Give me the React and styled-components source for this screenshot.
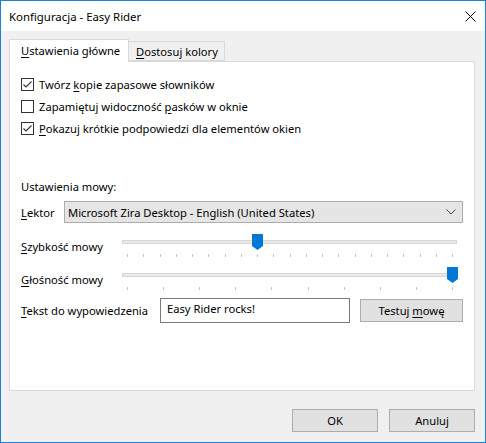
import React from "react";
import styled, { createGlobalStyle } from "styled-components";

const Global = createGlobalStyle`
  html, body { margin: 0; padding: 0; background: #fff; }
  body { font-family: "Noto Sans", "Open Sans", sans-serif; font-size: 11.2px; color: #000; }
  * { box-sizing: border-box; }
`;

const Window = styled.div`
  width: 486px;
  height: 443px;
  border: 1px solid #1883d7;
  background: #f0f0f0;
  display: flex;
  flex-direction: column;
`;

const TitleBar = styled.div`
  height: 30px;
  background: #fff;
  display: flex;
  align-items: center;
  justify-content: space-between;
  padding: 0 9px 0 8px;
  font-size: 11.4px;
`;

const Body = styled.div`
  flex: 1;
  display: flex;
  flex-direction: column;
  padding: 8px 10px 0 8px;
`;

const TabStrip = styled.div`
  display: flex;
  align-items: flex-end;
  height: 22px;
  position: relative;
  z-index: 1;
`;

const Tab = styled.div`
  height: ${(p) => (p.$active ? "23px" : "20px")};
  margin-bottom: ${(p) => (p.$active ? "-1px" : "0")};
  width: ${(p) => p.$w}px;
  padding-left: ${(p) => (p.$active ? "11px" : "7px")};
  background: ${(p) => (p.$active ? "#fff" : "#f0f0f0")};
  border: 1px solid #d9d9d9;
  border-bottom: ${(p) => (p.$active ? "none" : "1px solid #d9d9d9")};
  border-left: ${(p) => (p.$first ? "1px solid #d9d9d9" : "none")};
  display: flex;
  align-items: center;
  padding-bottom: ${(p) => (p.$active ? "2px" : "0")};
`;

const Panel = styled.div`
  height: 330px;
  background: #fff;
  border: 1px solid #d9d9d9;
  padding: 11px 11px 0 11px;
  display: flex;
  flex-direction: column;
`;

const CheckRow = styled.label`
  height: 22px;
  display: flex;
  align-items: center;
  gap: 5px;
`;

const Box = styled.span`
  width: 13px;
  height: 13px;
  border: 1px solid #333;
  background: #fff;
  display: inline-flex;
  align-items: center;
  justify-content: center;
`;

const U = styled.span`
  text-decoration: underline;
  text-underline-offset: 2px;
`;

const SectionLabel = styled.div`
  margin-top: 38px;
  height: 18px;
  display: flex;
  align-items: center;
`;

const FieldRow = styled.div`
  display: flex;
  align-items: center;
  margin-top: ${(p) => p.$mt}px;
  height: ${(p) => p.$h}px;
`;

const Label = styled.div`
  width: ${(p) => p.$w}px;
  flex: none;
`;

const Select = styled.div`
  width: 401px;
  height: 22px;
  background: #e5e5e5;
  border: 1px solid #acacac;
  display: flex;
  align-items: center;
  justify-content: space-between;
  padding: 0 6px 0 3px;
`;

const SliderBox = styled.div`
  position: relative;
  width: 335px;
  height: 24px;
`;

const Track = styled.div`
  position: absolute;
  left: 0;
  right: 0;
  top: 6px;
  height: 4px;
  background: #e7eaea;
  border: 1px solid #d6d6d6;
`;

const Tick = styled.div`
  position: absolute;
  top: 20px;
  width: 1px;
  height: 3px;
  background: #c4c4c4;
`;

const Thumb = styled.svg`
  position: absolute;
  top: 0;
  width: 11px;
  height: 16px;
`;

const TextInput = styled.div`
  width: 190px;
  height: 25px;
  border: 1px solid #7a7a7a;
  background: #fff;
  padding: 2px 0 0 6px;
`;

const Button = styled.div`
  width: ${(p) => p.$w}px;
  height: 23px;
  background: #e1e1e1;
  border: 1px solid #adadad;
  display: flex;
  align-items: center;
  justify-content: center;
`;

const Footer = styled.div`
  display: flex;
  justify-content: flex-end;
  gap: 11px;
  margin-top: 18px;
`;

function Check({ checked, children }) {
  return (
    <CheckRow>
      <Box>
        {checked && (
          <svg width="11" height="11" viewBox="0 0 11 11">
            <path d="M1.5 5.5 L4 8 L9.5 2.5" fill="none" stroke="#333" strokeWidth="1.1" />
          </svg>
        )}
      </Box>
      <span>{children}</span>
    </CheckRow>
  );
}

function Slider({ ticks, value }) {
  const span = 325;
  const list = [];
  for (let i = 0; i <= ticks; i++) list.push(i);
  const x = 5 + (span * value) / ticks;
  return (
    <SliderBox>
      <Track />
      {list.map((i) => (
        <Tick key={i} style={{ left: Math.round(5 + (span * i) / ticks) }} />
      ))}
      <Thumb viewBox="0 0 11 16" style={{ left: Math.round(x - 5) }}>
        <path d="M0 0 H11 V12 L5.5 16 L0 12 Z" fill="#0078d7" />
      </Thumb>
    </SliderBox>
  );
}

export default function App() {
  return (
    <>
      <Global />
      <Window>
        <TitleBar>
          <span>Konfiguracja - Easy Rider</span>
          <svg width="11" height="11" viewBox="0 0 11 11">
            <path d="M0.5 0.5 L10.5 10.5 M10.5 0.5 L0.5 10.5" stroke="#000" strokeWidth="1" />
          </svg>
        </TitleBar>
        <Body>
          <TabStrip>
            <Tab $active $first $w={120}>
              <span>
                <U>U</U>stawienia główne
              </span>
            </Tab>
            <Tab $w={96}>
              <span>
                <U>D</U>ostosuj kolory
              </span>
            </Tab>
          </TabStrip>
          <Panel>
            <Check checked>
              Twórz <U>k</U>opie zapasowe słowników
            </Check>
            <Check>
              Zapamiętuj widoczność <U>p</U>asków w oknie
            </Check>
            <Check checked>
              <U>P</U>okazuj krótkie podpowiedzi dla elementów okien
            </Check>
            <SectionLabel>Ustawienia mowy:</SectionLabel>
            <FieldRow $mt={6} $h={22}>
              <Label $w={43}>
                <U>L</U>ektor
              </Label>
              <Select>
                <span>Microsoft Zira Desktop - English (United States)</span>
                <svg width="10" height="6" viewBox="0 0 10 6">
                  <path d="M0.5 0.5 L5 5 L9.5 0.5" fill="none" stroke="#444" strokeWidth="1" />
                </svg>
              </Select>
            </FieldRow>
            <FieldRow $mt={11} $h={24}>
              <Label $w={101}>
                <U>S</U>zybkość mowy
              </Label>
              <Slider ticks={20} value={8} />
            </FieldRow>
            <FieldRow $mt={9} $h={24}>
              <Label $w={101}>
                <U>G</U>łośność mowy
              </Label>
              <Slider ticks={9} value={9} />
            </FieldRow>
            <FieldRow $mt={7} $h={25}>
              <Label $w={139}>
                <U>T</U>ekst do wypowiedzenia
              </Label>
              <TextInput>Easy Rider rocks!</TextInput>
              <Button $w={103} style={{ marginLeft: 10 }}>
                <span>
                  Testuj <U>m</U>owę
                </span>
              </Button>
            </FieldRow>
          </Panel>
          <Footer>
            <Button $w={86}>OK</Button>
            <Button $w={86}>Anuluj</Button>
          </Footer>
        </Body>
      </Window>
    </>
  );
}
